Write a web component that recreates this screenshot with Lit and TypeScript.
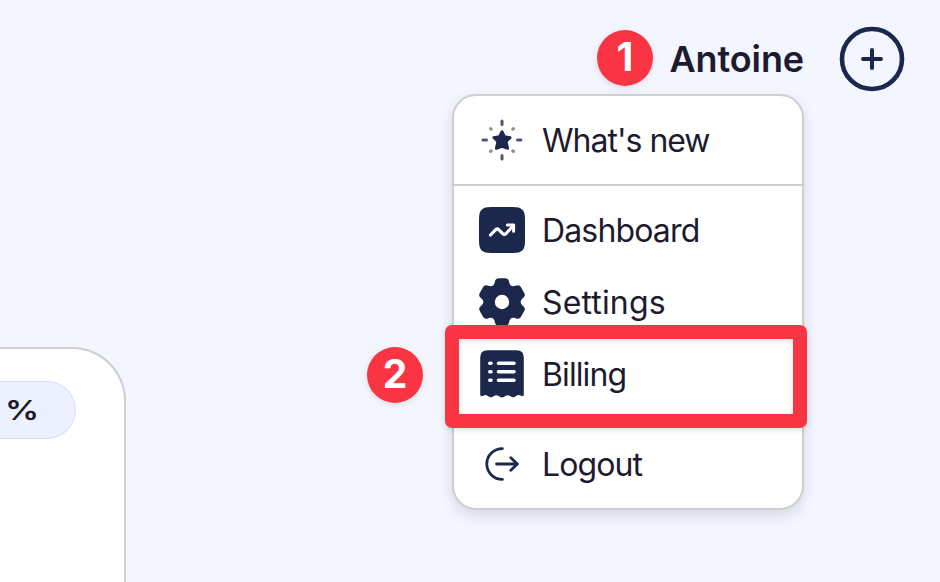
import { LitElement, html, css, svg } from "lit";
import { customElement } from "lit/decorators.js";

// One tooth and the valley after it, repeated every 60 degrees.
function gearPath(): string {
  const turn = (x: number, y: number, k: number) => {
    const a = (k * Math.PI) / 3;
    const px = 24 + x * Math.cos(a) - y * Math.sin(a);
    const py = 24 + x * Math.sin(a) + y * Math.cos(a);
    return px.toFixed(2) + " " + py.toFixed(2);
  };
  let d = "M" + turn(-7.2, -19.8, 0);
  for (let k = 0; k < 6; k++) {
    d += `C${turn(-6.8, -22.6, k)} ${turn(-5.6, -23.8, k)} ${turn(-3, -23.8, k)}`;
    d += `L${turn(3, -23.8, k)}`;
    d += `C${turn(5.6, -23.8, k)} ${turn(6.8, -22.6, k)} ${turn(7.2, -19.8, k)}`;
    d += `C${turn(7.9, -16.2, k)} ${turn(-7.9, -16.2, k + 1)} ${turn(-7.2, -19.8, k + 1)}`;
  }
  return d + "Z M16.8 24a7.2 7.2 0 1 0 14.4 0a7.2 7.2 0 1 0 -14.4 0Z";
}

const icons = {
  news: svg`
    <path d="M24 15.6L26.5 20.7L32.2 21.6L28.1 25.6L29.7 32.3L24 30.4L18.3 32.3L19.9 25.6L15.8 21.6L21.5 20.7Z" fill="#1b284c" stroke="#1b284c" stroke-width="2.8" stroke-linejoin="round"/>
    <g stroke="#1b284c" stroke-linecap="round" fill="none">
      <path d="M24 5V8.5M24 39.5V43M5 24H8.5M39.5 24H43" stroke-width="3" opacity=".78"/>
      <path d="M12.6 12.6L13.1 13.1M34.9 13.1L35.4 12.6M12.6 35.4L13.1 34.9M34.9 34.9L35.4 35.4" stroke-width="3.2" opacity=".52"/>
    </g>`,
  dashboard: svg`
    <path d="M1 13C1 4 4 1 13 1H35C44 1 47 4 47 13V35C47 44 44 47 35 47H13C4 47 1 44 1 35Z" fill="#1b284c"/>
    <path d="M12.5 29L17.5 23.8Q19.2 22.2 20.9 23.8L24.7 27.6Q26.4 29.2 28.1 27.5L35 20" fill="none" stroke="#fff" stroke-width="3.2" stroke-linecap="round" stroke-linejoin="round"/>
    <path d="M29.3 19H35.6V25.2" fill="none" stroke="#fff" stroke-width="3" stroke-linecap="round" stroke-linejoin="round"/>`,
  settings: svg`<path d=${gearPath()} fill="#1b284c" fill-rule="evenodd"/>`,
  billing: svg`
    <path d="M2.2 7.5Q2.2 0.2 9.5 0.2H38.5Q45.8 0.2 45.8 7.5V44.5Q45.8 46.5 43.9 46.1L41.5 45.2Q40 44.8 38.5 45.8L36.5 47Q35 47.8 33.3 46.8L31 45.5Q29.4 44.7 27.8 45.7L25.7 47Q24 47.9 22.3 47L20.2 45.7Q18.6 44.7 17 45.5L14.7 46.8Q13 47.8 11.5 47L9.5 45.8Q8 44.8 6.5 45.2L4.1 46.1Q2.2 46.5 2.2 44.5Z" fill="#1b284c"/>
    <path d="M20.5 13.3H36M20.5 21.8H36M20.5 30.3H36M11.8 13.3H13M11.8 21.8H13M11.8 30.3H13" fill="none" stroke="#fff" stroke-width="3.6" stroke-linecap="round"/>`,
  logout: svg`
    <path d="M24.4 8.6A15.6 15.4 0 1 0 24.4 39.4" fill="none" stroke="#1b284c" stroke-width="2.8" stroke-linecap="round"/>
    <path d="M18.6 24H39.4M32.8 17.8L39.4 24L32.8 30.2" fill="none" stroke="#1b284c" stroke-width="2.8" stroke-linecap="round" stroke-linejoin="round"/>`,
};

type Entry = { icon: keyof typeof icons; label: string; tracking: number };

const groups: Entry[][] = [
  [{ icon: "news", label: "What's new", tracking: -1 }],
  [
    { icon: "dashboard", label: "Dashboard", tracking: -0.85 },
    { icon: "settings", label: "Settings", tracking: 0.15 },
    { icon: "billing", label: "Billing", tracking: -0.9 },
  ],
  [{ icon: "logout", label: "Logout", tracking: -0.9 }],
];

@customElement("app-root")
export class AppRoot extends LitElement {
  static styles = css`
    :host {
      display: flex;
      flex-direction: column;
      position: relative;
      box-sizing: border-box;
      width: 940px;
      height: 582px;
      overflow: hidden;
      background: #f3f5ff;
      color: #1e1b2e;
      font-family: Inter, "Liberation Sans", sans-serif;
    }
    svg { display: block; flex: none; }
    .header {
      display: flex;
      justify-content: flex-end;
      align-items: center;
      height: 64px;
      padding: 27px 36px 0 0;
    }
    .name {
      font-size: 36px;
      line-height: 64px;
      font-weight: 600;
      letter-spacing: -0.1px;
      margin-right: 36px;
    }
    .add {
      width: 64px;
      height: 64px;
    }
    .add svg { overflow: visible; }
    .card {
      box-sizing: border-box;
      width: 126px;
      height: 300px;
      margin-top: 256px;
      flex: none;
      background: #fff;
      border: 2px solid #cfcfcf;
      border-left: 0;
      border-top-right-radius: 54px;
      padding-top: 32px;
    }
    .pill {
      box-sizing: border-box;
      width: 76px;
      height: 58px;
      border: 1px solid #d6dcff;
      border-left: 0;
      border-radius: 0 29px 29px 0;
      background: #edf0ff;
      padding-left: 4.5px;
      font-size: 27px;
      line-height: 58px;
      font-weight: 600;
    }
    .percent {
      display: inline-block;
      transform: scaleX(1.26);
      transform-origin: left;
    }
    .menu {
      position: absolute;
      left: 452px;
      top: 94px;
      box-sizing: border-box;
      width: 352px;
      border: 2px solid #cfcfcf;
      border-radius: 24px;
      background: #fff;
      box-shadow: 0 6px 14px rgba(30, 30, 60, 0.13);
    }
    .group { padding: 8px 25px; }
    .group + .group { border-top: 2px solid #cfcfcf; }
    .item {
      display: flex;
      align-items: center;
      height: 72px;
    }
    .item svg { margin-left: -1px; }
    .label {
      margin-left: 16px;
      padding-top: 2px;
      font-size: 32px;
      line-height: 40px;
      white-space: nowrap;
    }
    .badge {
      position: absolute;
      width: 56px;
      height: 56px;
      border-radius: 50%;
      background: #f93543;
      color: #fff;
      font-size: 39px;
      line-height: 54px;
      font-weight: 700;
      text-align: center;
      box-shadow: 0 2px 6px rgba(0, 0, 0, 0.1);
    }
    .one { left: 597px; top: 30px; }
    .two { left: 367px; top: 347.4px; }
    .frame {
      position: absolute;
      left: 445px;
      top: 325px;
      box-sizing: border-box;
      width: 362px;
      height: 103px;
      border: 14px solid #f93543;
      border-radius: 7px;
      box-shadow: 0 2px 6px rgba(0, 0, 0, 0.13), inset 0 2px 6px rgba(0, 0, 0, 0.13);
    }
  `;

  render() {
    return html`
      <div class="header">
        <span class="name">Antoine</span>
        <div class="add">
          <svg width="64" height="64" viewBox="0 0 64 64" fill="none" stroke="#1b284c">
            <circle cx="32" cy="32" r="30" stroke-width="4.6" />
            <path d="M32 23V41M23 32H41" stroke-width="4" stroke-linecap="round" />
          </svg>
        </div>
      </div>
      <div class="card"><div class="pill"><span class="percent">%</span></div></div>
      <div class="menu">
        ${groups.map(
          (group) => html`<div class="group">
            ${group.map(
              (entry) => html`<div class="item">
                <svg width="48" height="48" viewBox="0 0 48 48">${icons[entry.icon]}</svg>
                <span class="label" style="letter-spacing:${entry.tracking}px">${entry.label}</span>
              </div>`
            )}
          </div>`
        )}
      </div>
      <div class="frame"></div>
      <div class="badge one">1</div>
      <div class="badge two">2</div>
    `;
  }
}
